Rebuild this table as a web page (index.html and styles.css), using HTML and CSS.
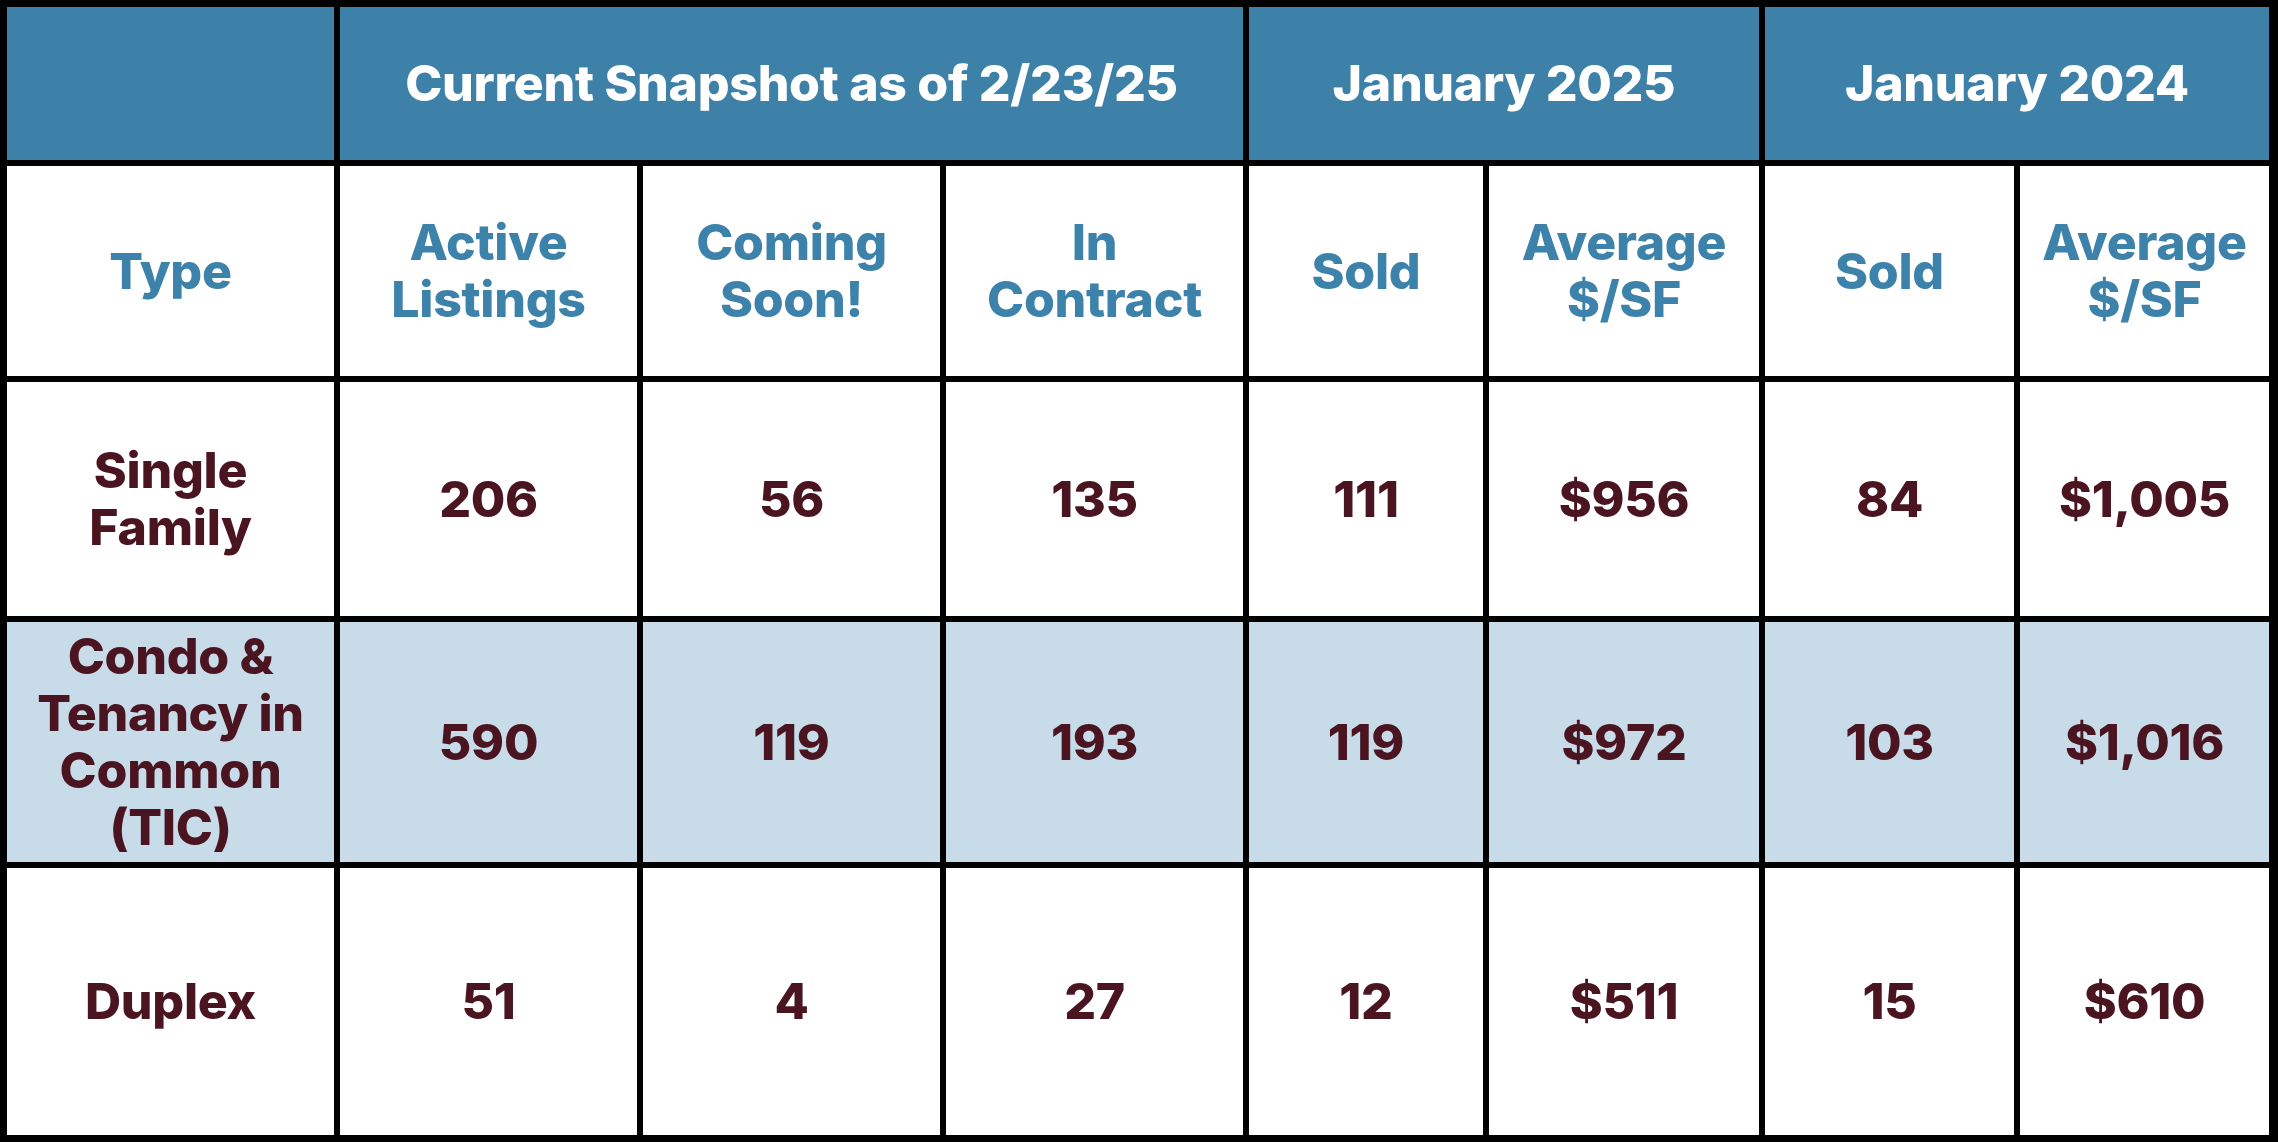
FILE: index.html
```html
<!DOCTYPE html>
<html lang="en">
<head>
<meta charset="utf-8">
<title>Market Snapshot</title>
<link rel="stylesheet" href="styles.css">
</head>
<body>
<div class="table">
  <div class="cell group"></div>
  <div class="cell group span3">Current Snapshot as of 2/23/25</div>
  <div class="cell group span2">January 2025</div>
  <div class="cell group span2">January 2024</div>

  <div class="cell head">Type</div>
  <div class="cell head">Active<br>Listings</div>
  <div class="cell head">Coming<br>Soon!</div>
  <div class="cell head">In<br>Contract</div>
  <div class="cell head">Sold</div>
  <div class="cell head">Average<br>$/SF</div>
  <div class="cell head">Sold</div>
  <div class="cell head">Average<br>$/SF</div>

  <div class="cell data">Single<br>Family</div>
  <div class="cell data">206</div>
  <div class="cell data">56</div>
  <div class="cell data">135</div>
  <div class="cell data">111</div>
  <div class="cell data">$956</div>
  <div class="cell data">84</div>
  <div class="cell data">$1,005</div>

  <div class="cell data alt">Condo &amp;<br>Tenancy in<br>Common<br>(TIC)</div>
  <div class="cell data alt">590</div>
  <div class="cell data alt">119</div>
  <div class="cell data alt">193</div>
  <div class="cell data alt">119</div>
  <div class="cell data alt">$972</div>
  <div class="cell data alt">103</div>
  <div class="cell data alt">$1,016</div>

  <div class="cell data">Duplex</div>
  <div class="cell data">51</div>
  <div class="cell data">4</div>
  <div class="cell data">27</div>
  <div class="cell data">12</div>
  <div class="cell data">$511</div>
  <div class="cell data">15</div>
  <div class="cell data">$610</div>
</div>
</body>
</html>
```

FILE: styles.css
```css
html, body {
  margin: 0;
  padding: 0;
  background: #000;
}

.table {
  display: grid;
  grid-template-columns: 327px 297px 297px 297px 234px 270px 249px 249px;
  grid-template-rows: 153px 210px 234px 240px 267px;
  gap: 6px;
  padding: 7px 9px 7px 7px;
  width: 2278px;
  height: 1142px;
  box-sizing: border-box;
  background: #000;
  font-family: Inter, "Noto Sans", "Liberation Sans", sans-serif;
  font-weight: 800;
  font-size: 50px;
  line-height: 57px;
  letter-spacing: -0.3px;
}

.cell {
  display: flex;
  align-items: center;
  justify-content: center;
  text-align: center;
  background: #ffffff;
}

.group {
  background: #3d81a9;
  color: #ffffff;
}

.span3 {
  grid-column: span 3;
}

.span2 {
  grid-column: span 2;
}

.head {
  color: #3d82ab;
}

.data {
  color: #4a1520;
}

.alt {
  background: #c8dbe8;
}
```
